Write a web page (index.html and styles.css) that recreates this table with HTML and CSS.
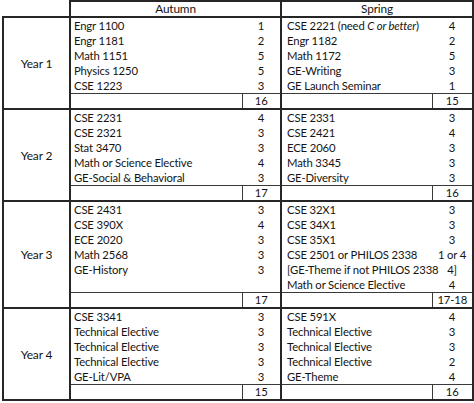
FILE: index.html
```html
<!DOCTYPE html>
<html>
<head>
<meta charset="utf-8">
<link rel="stylesheet" href="styles.css">
</head>
<body>
<table class="plan">
  <colgroup>
    <col class="c-year"><col class="c-course-a"><col class="c-cr-a"><col class="c-course-s"><col class="c-cr-s">
  </colgroup>
  <thead>
    <tr class="head">
      <th class="corner"></th>
      <th class="sem" colspan="2">Autumn</th>
      <th class="sem" colspan="2">Spring</th>
    </tr>
  </thead>
  <tbody class="year">
    <tr><th class="yr" rowspan="6">Year 1</th><td class="course a">Engr 1100</td><td class="cr">1</td><td class="course s">CSE 2221 (need <i>C or better</i>)</td><td class="cr last">4</td></tr>
    <tr><td class="course a">Engr 1181</td><td class="cr">2</td><td class="course s">Engr 1182</td><td class="cr last">2</td></tr>
    <tr><td class="course a">Math 1151</td><td class="cr">5</td><td class="course s">Math 1172</td><td class="cr last">5</td></tr>
    <tr><td class="course a">Physics 1250</td><td class="cr">5</td><td class="course s">GE-Writing</td><td class="cr last">3</td></tr>
    <tr><td class="course a">CSE 1223</td><td class="cr">3</td><td class="course s">GE Launch Seminar</td><td class="cr last">1</td></tr>
    <tr class="total"><td class="course a"></td><td class="cr">16</td><td class="course s"></td><td class="cr last">15</td></tr>
  </tbody>
  <tbody class="year">
    <tr><th class="yr" rowspan="6">Year 2</th><td class="course a">CSE 2231</td><td class="cr">4</td><td class="course s">CSE 2331</td><td class="cr last">3</td></tr>
    <tr><td class="course a">CSE 2321</td><td class="cr">3</td><td class="course s">CSE 2421</td><td class="cr last">4</td></tr>
    <tr><td class="course a">Stat 3470</td><td class="cr">3</td><td class="course s">ECE 2060</td><td class="cr last">3</td></tr>
    <tr><td class="course a">Math or Science Elective</td><td class="cr">4</td><td class="course s">Math 3345</td><td class="cr last">3</td></tr>
    <tr><td class="course a">GE-Social &amp; Behavioral</td><td class="cr">3</td><td class="course s">GE-Diversity</td><td class="cr last">3</td></tr>
    <tr class="total"><td class="course a"></td><td class="cr">17</td><td class="course s"></td><td class="cr last">16</td></tr>
  </tbody>
  <tbody class="year">
    <tr><th class="yr" rowspan="7">Year 3</th><td class="course a">CSE 2431</td><td class="cr">3</td><td class="course s">CSE 32X1</td><td class="cr last">3</td></tr>
    <tr><td class="course a">CSE 390X</td><td class="cr">4</td><td class="course s">CSE 34X1</td><td class="cr last">3</td></tr>
    <tr><td class="course a">ECE 2020</td><td class="cr">3</td><td class="course s">CSE 35X1</td><td class="cr last">3</td></tr>
    <tr><td class="course a">Math 2568</td><td class="cr">3</td><td class="course s">CSE 2501 or PHILOS 2338</td><td class="cr last">1 or 4</td></tr>
    <tr><td class="course a">GE-History</td><td class="cr">3</td><td class="course s">[GE-Theme if not PHILOS 2338</td><td class="cr last">4]</td></tr>
    <tr><td class="course a"></td><td class="cr"></td><td class="course s">Math or Science Elective</td><td class="cr last">4</td></tr>
    <tr class="total"><td class="course a"></td><td class="cr">17</td><td class="course s"></td><td class="cr last">17-18</td></tr>
  </tbody>
  <tbody class="year">
    <tr><th class="yr" rowspan="6">Year 4</th><td class="course a">CSE 3341</td><td class="cr">3</td><td class="course s">CSE 591X</td><td class="cr last">4</td></tr>
    <tr><td class="course a">Technical Elective</td><td class="cr">3</td><td class="course s">Technical Elective</td><td class="cr last">3</td></tr>
    <tr><td class="course a">Technical Elective</td><td class="cr">3</td><td class="course s">Technical Elective</td><td class="cr last">3</td></tr>
    <tr><td class="course a">Technical Elective</td><td class="cr">3</td><td class="course s">Technical Elective</td><td class="cr last">2</td></tr>
    <tr><td class="course a">GE-Lit/VPA</td><td class="cr">3</td><td class="course s">GE-Theme</td><td class="cr last">4</td></tr>
    <tr class="total"><td class="course a"></td><td class="cr">15</td><td class="course s"></td><td class="cr last">16</td></tr>
  </tbody>
</table>
</body>
</html>
```
FILE: styles.css
```css
html, body {
  margin: 0;
  padding: 0;
  background: #ffffff;
}

.plan {
  margin: 0 0 0 2px;
  border-collapse: collapse;
  table-layout: fixed;
  width: 470px;
  font-family: Lato, "Liberation Sans", sans-serif;
  font-size: 11.3px;
  letter-spacing: -0.15px;
  color: #141414;
}

.c-year { width: 67px; }
.c-course-a { width: 172px; }
.c-cr-a { width: 39px; }
.c-course-s { width: 151px; }
.c-cr-s { width: 41px; }

.plan th,
.plan td {
  padding: 0;
  height: 15px;
  line-height: 15px;
  white-space: nowrap;
}

.head th {
  height: 14px;
  line-height: 14px;
  font-weight: normal;
  font-size: 11.8px;
}

.corner {
  border: none;
}

.sem {
  text-align: center;
  border: 2px solid #262626;
}

.year {
  border-top: 2px solid #262626;
  border-bottom: 2px solid #262626;
}

.yr {
  font-weight: normal;
  text-align: center;
  vertical-align: middle;
  border-left: 2px solid #262626;
  border-right: 2px solid #262626;
  font-size: 12px;
}

.course {
  text-align: left;
}

.course.a {
  padding-left: 3px;
}

.course.s {
  padding-left: 5px;
  border-left: 2px solid #262626;
}

.cr {
  text-align: center;
}

.cr.last {
  border-right: 2px solid #262626;
}

.total td {
  height: 14px;
  line-height: 14px;
  border-top: 1px solid #3a3a3a;
}

.total .cr {
  border-left: 1px solid #3a3a3a;
}
```
